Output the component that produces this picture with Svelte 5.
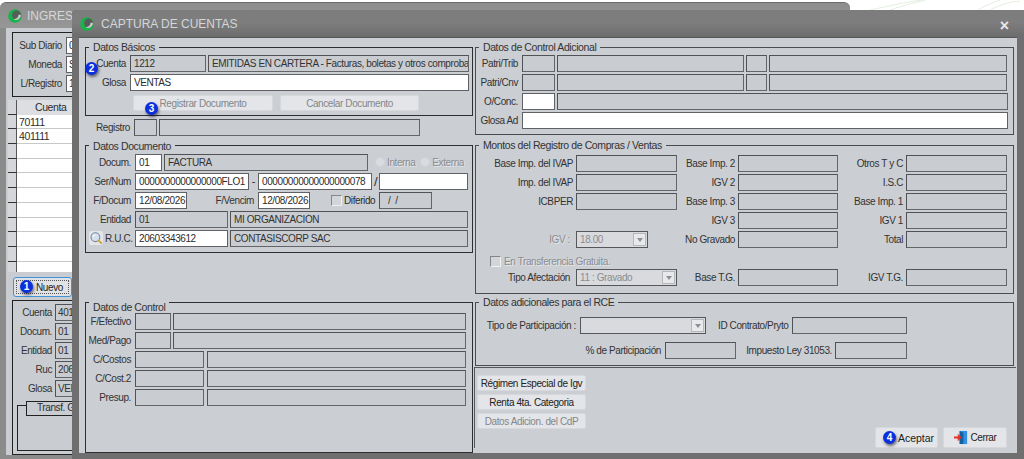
<script>
  // fixed sample data for the back window's visible rows
  const cuentas = ['70111', '401111', '', '', '', '', '', '', '', '', ''];
</script>

{#snippet logo()}
  <svg class="logo" viewBox="0 0 16 16" aria-hidden="true">
    <circle cx="8" cy="8" r="7.8" fill="#16b54a" />
    <circle cx="9.8" cy="7" r="5.2" fill="#585d5a" />
    <path d="M14.8 6.5A5.4 5.4 0 0 1 6.4 11.6 5 5 0 0 0 12 6.5Z" fill="#c9cdca" />
  </svg>
{/snippet}

<div class="desktop">
  <svg class="leaves" viewBox="0 0 174 10" aria-hidden="true">
    <path d="M20 10C40 6 55 2 72 0M40 10C52 6 62 3 76 0M128 10C134 6 142 3 150 0M140 10C146 7 156 2 170 1" />
  </svg>

  <!-- window behind the modal -->
  <section class="win back">
    <header class="title">
      {@render logo()}
      <span class="clip">INGRESO DE COMPROBANTES</span>
    </header>
    <div class="back-body">
      <div class="back-box top">
        <div class="row"><label>Sub Diario</label><input value="05" readonly /></div>
        <div class="row"><label>Moneda</label><input value="S/" readonly /></div>
        <div class="row"><label>L/Registro</label><input value="14" readonly /></div>
      </div>
      <div class="table">
        <div class="corner"></div><div class="th">Cuenta</div>
        {#each cuentas as c}
          <div class="rh"></div><div class="td">{c}</div>
        {/each}
      </div>
      <div class="nuevo-wrap">
        <button class="nuevo"><span class="inner">Nuevo</span></button>
        <b class="badge b1">1</b>
      </div>
      <div class="back-box low">
        <div class="row"><label>Cuenta</label><input disabled value="401111" /></div>
        <div class="row"><label>Docum.</label><input disabled value="01" /></div>
        <div class="row"><label>Entidad</label><input disabled value="01" /></div>
        <div class="row"><label>Ruc</label><input disabled value="20603343612" /></div>
        <div class="row"><label>Glosa</label><input disabled value="VENTAS" /></div>
        <div class="transf"><span>Transf. Gratuita</span></div>
      </div>
    </div>
  </section>

  <!-- modal window -->
  <section class="win front">
    <header class="title">
      {@render logo()}
      <span>CAPTURA DE CUENTAS</span>
      <span class="close">×</span>
    </header>

    <div class="panel">
      <div class="col left">
        <fieldset class="basicos">
          <legend>Datos Básicos</legend>
          <div class="row">
            <label>Cuenta</label>
            <input class="w76" disabled value="1212" />
            <input class="w261" disabled value="EMITIDAS EN CARTERA - Facturas, boletas y otros comprobantes" />
          </div>
          <div class="row">
            <label>Glosa</label>
            <input class="w339" readonly value="VENTAS" />
          </div>
          <div class="actions">
            <button class="btn w140" disabled>Registrar Documento</button>
            <button class="btn w139" disabled>Cancelar Documento</button>
          </div>
          <b class="badge b2">2</b>
          <b class="badge b3">3</b>
        </fieldset>

        <div class="row registro">
          <label>Registro</label>
          <input class="w23" disabled />
          <input class="w261" disabled />
        </div>

        <fieldset class="documento">
          <legend>Datos Documento</legend>
          <div class="row">
            <label>Docum.</label>
            <input class="w27" readonly value="01" />
            <input class="w204" disabled value="FACTURA" />
            <span class="radio first"></span><span class="off">Interna</span>
            <span class="radio second"></span><span class="off">Externa</span>
          </div>
          <div class="row">
            <label>Ser/Num</label>
            <input class="w114" readonly value="0000000000000000FLO1" />
            <span class="sep dash">-</span>
            <input class="w114" readonly value="00000000000000000078" />
            <span class="sep slash">/</span>
            <input class="w89" readonly />
          </div>
          <div class="row">
            <label>F/Docum</label>
            <input class="w52" readonly value="12/08/2026" />
            <label class="vencim">F/Vencim</label>
            <input class="w52" readonly value="12/08/2026" />
            <span class="check diferido"></span><span class="dif-label">Diferido</span>
            <input class="w53 fecha" disabled value="/  /" />
          </div>
          <div class="row">
            <label>Entidad</label>
            <input class="w93" disabled value="01" />
            <input class="w238" disabled value="MI ORGANIZACIÓN" />
          </div>
          <div class="row">
            <svg class="lupa" viewBox="0 0 14 14" aria-hidden="true">
              <rect width="14" height="14" rx="2" fill="#e4e6ea" />
              <circle cx="6.4" cy="6.2" r="4.4" fill="#d3e0f0" stroke="#7d8a9c" stroke-width="1.1" />
              <path d="M4 6.2a2.4 2.4 0 0 1 2.4-2.4" fill="none" stroke="#fff" />
              <path d="M9.8 9.6l2.4 2.4" stroke="#cda93a" stroke-width="2" stroke-linecap="round" />
            </svg>
            <label class="ruc">R.U.C.</label>
            <input class="w93" readonly value="20603343612" />
            <input class="w238" disabled value="CONTASISCORP SAC" />
          </div>
        </fieldset>

        <fieldset class="control">
          <legend>Datos de Control</legend>
          <div class="row"><label>F/Efectivo</label><input class="w36" disabled /><input class="w293" disabled /></div>
          <div class="row"><label>Med/Pago</label><input class="w36" disabled /><input class="w293" disabled /></div>
          <div class="row"><label>C/Costos</label><input class="w69" disabled /><input class="w259 gap1" disabled /></div>
          <div class="row"><label>C/Cost.2</label><input class="w69" disabled /><input class="w259 gap1" disabled /></div>
          <div class="row"><label>Presup.</label><input class="w69" disabled /><input class="w259 gap1" disabled /></div>
        </fieldset>
      </div>

      <div class="col right">
        <fieldset class="adicional">
          <legend>Datos de Control Adicional</legend>
          <div class="row"><label>Patri/Trib</label><input class="w33" disabled /><input class="w187" disabled /><input class="w21" disabled /><input class="w238" disabled /></div>
          <div class="row"><label>Patri/Cnv</label><input class="w33" disabled /><input class="w187" disabled /><input class="w21" disabled /><input class="w238" disabled /></div>
          <div class="row"><label>O/Conc.</label><input class="w33" readonly /><input class="w451" disabled /></div>
          <div class="row"><label>Glosa Ad</label><input class="w486" readonly /></div>
        </fieldset>

        <fieldset class="montos">
          <legend>Montos del Registro de Compras / Ventas</legend>
          <div class="grid">
            <label>Base Imp. del IVAP</label><input disabled /><label>Base Imp. 2</label><input disabled /><label>Otros T y C</label><input disabled />
            <label>Imp. del IVAP</label><input disabled /><label>IGV 2</label><input disabled /><label>I.S.C</label><input disabled />
            <label>ICBPER</label><input disabled /><label>Base Imp. 3</label><input disabled /><label>Base Imp. 1</label><input disabled />
            <span></span><span></span><label>IGV 3</label><input disabled /><label>IGV 1</label><input disabled />
            <label class="off inset">IGV :</label><div class="combo w72"><span>18.00</span><i></i></div><label>No Gravado</label><input disabled /><label>Total</label><input disabled />
            <div class="gratuita"><span class="check"></span><span class="off">En Transferencia Gratuita.</span></div>
            <label class="inset">Tipo Afectación</label><div class="combo"><span>11 : Gravado</span><i></i></div><label>Base T.G.</label><input disabled /><label>IGV T.G.</label><input disabled />
          </div>
        </fieldset>

        <fieldset class="rce">
          <legend>Datos adicionales para el RCE</legend>
          <div class="row">
            <label class="tipo">Tipo de Participación :</label>
            <div class="combo w126"><span></span><i></i></div>
            <label class="contrato">ID Contrato/Pryto</label>
            <input class="w115" disabled />
          </div>
          <div class="row">
            <label class="pct">% de Participación</label>
            <input class="w71" disabled />
            <label class="ley">Impuesto Ley 31053.</label>
            <input class="w72" disabled />
          </div>
        </fieldset>

        <div class="bottom">
          <div class="extras">
            <button class="btn">Régimen Especial de Igv</button>
            <button class="btn">Renta 4ta. Categoria</button>
            <button class="btn" disabled>Datos Adicion. del CdP</button>
          </div>
          <div class="footer">
            <div class="aceptar-wrap">
              <button class="btn big aceptar">Aceptar</button>
              <b class="badge b4">4</b>
            </div>
            <button class="btn big w64">
              <svg class="salir" viewBox="0 0 16 16" aria-hidden="true">
                <path d="M6 1h8v14H6z" fill="#2f8fe0" />
                <path d="M6 1l4 2v12H6z" fill="#17609f" />
                <path d="M0 7h4V4l4 4-4 4V9H0z" fill="#e2332b" />
              </svg>
              Cerrar
            </button>
          </div>
        </div>
      </div>
    </div>
  </section>
</div>

<style>
  :global(body) {
    margin: 0;
    background: #fff;
  }

  .desktop {
    position: relative;
    width: 1024px;
    height: 459px;
    overflow: hidden;
    font-family: "Liberation Sans", Arial, sans-serif;
    font-size: 10px;
    letter-spacing: -0.4px;
    color: #2c2c2c;
  }

  .leaves {
    position: absolute;
    left: 850px;
    top: 0;
    width: 174px;
    height: 10px;
    fill: none;
    stroke: #e3efe0;
  }

  /* windows */
  .win {
    position: absolute;
    display: flex;
    flex-direction: column;
    box-sizing: border-box;
    border-radius: 6px 6px 0 0;
  }
  .back {
    left: 0;
    top: 2px;
    width: 850px;
    height: 457px;
    background: #8b8b8b;
    border-top: 1px solid #6c6c6c;
  }
  .front {
    left: 72px;
    top: 10px;
    width: 952px;
    height: 449px;
    background: #6f6f6f;
    border-radius: 4px 0 0 0;
  }

  .title {
    display: flex;
    align-items: center;
    flex: none;
    gap: 7px;
    height: 25px;
    padding-left: 8px;
    font-size: 12px;
    letter-spacing: 0;
    color: #d4d6d8;
  }
  .back .title {
    background: linear-gradient(#8d8d8d, #979797);
    border-radius: 6px 6px 0 0;
    gap: 5px;
  }
  .front .title {
    height: 27px;
    background: linear-gradient(#7c7c7c, #7e7e7e 45%, #6c6c6c);
    border-radius: 4px 0 0 0;
  }
  .clip {
    width: 46px;
    overflow: hidden;
    white-space: nowrap;
  }
  .logo {
    flex: none;
    width: 14px;
    height: 14px;
  }
  .close {
    margin: 5px 15px 0 auto;
    font-size: 16px;
    line-height: 16px;
    font-weight: bold;
    color: #e8e8e8;
  }

  /* shared field styles */
  input {
    box-sizing: border-box;
    min-width: 0;
    height: 17px;
    margin: 0;
    padding: 0 0 0 3px;
    border: 1px solid #5f6164;
    background: #fff;
    font: inherit;
    letter-spacing: inherit;
    color: #2c2c2c;
    outline: none;
  }
  input:disabled {
    background: #c9ccd1;
    border-color: #636569;
    border-top-color: #505256;
    border-left-color: #505256;
    -webkit-text-fill-color: #333;
    opacity: 1;
  }
  label {
    text-align: right;
    white-space: nowrap;
    color: #333;
  }

  .row {
    display: flex;
    align-items: center;
    gap: 2px;
    height: 17px;
    margin-bottom: 2px;
  }
  .row label {
    flex: none;
    width: 45px;
    margin-right: 2px;
  }

  fieldset {
    position: relative;
    box-sizing: border-box;
    min-width: 0;
    margin: 0;
    padding: 2px 0 0;
    border: 1px solid #2e2f31;
    border-radius: 0;
  }
  legend {
    height: 12px;
    margin-left: 3px;
    padding: 0 4px;
    font-size: 10.5px;
    line-height: 12px;
    color: #333;
  }

  .off {
    color: #8b8d90;
    text-shadow: 1px 1px 0 #e4e6e9;
  }
  .inset {
    padding-right: 3px;
  }

  .btn {
    box-sizing: border-box;
    height: 16px;
    padding: 0;
    border: 1px solid #d6d8dc;
    border-radius: 2px;
    background: #e3e5e8;
    font: inherit;
    letter-spacing: inherit;
    white-space: nowrap;
    color: #222;
  }
  .btn:disabled {
    color: #84868a;
  }

  .radio {
    flex: none;
    width: 10px;
    height: 10px;
    border-radius: 50%;
    background: #d9dbde;
    border: 1px solid #d0d2d5;
    box-sizing: border-box;
  }
  .check {
    flex: none;
    box-sizing: border-box;
    display: inline-block;
    width: 11px;
    height: 11px;
    border: 1px solid #85878a;
    border-right-color: #eef0f2;
    border-bottom-color: #eef0f2;
    background: #d3d5d9;
  }

  .combo {
    box-sizing: border-box;
    display: flex;
    align-items: center;
    justify-content: space-between;
    height: 17px;
    padding: 0 1px 0 3px;
    border: 1px solid #55575a;
    background: #d8dade;
    color: #8b8d90;
  }
  .combo i {
    position: relative;
    width: 13px;
    height: 13px;
    background: #e8e9eb;
    border: 1px solid #b5b7ba;
    box-sizing: border-box;
  }
  .combo i::after {
    content: "";
    position: absolute;
    left: 3px;
    top: 4px;
    border: 3px solid transparent;
    border-top: 4px solid #8d8f92;
    border-bottom: 0;
  }

  /* badges sit over the form */
  .badge {
    position: absolute;
    z-index: 3;
    width: 13px;
    height: 13px;
    border-radius: 50%;
    background: #0b2fdc;
    color: #fff;
    font-size: 10px;
    letter-spacing: 0;
    line-height: 13px;
    text-align: center;
    box-shadow: 1px 2px 3px rgba(20, 20, 40, 0.6);
  }
  .b1 { left: 7px; top: 3px; }
  .b2 { left: -1px; top: 9px; }
  .b3 { left: 59px; top: 49px; }
  .b4 { left: 8px; top: 4px; }

  /* back window */
  .back-body {
    flex: 1;
    display: flex;
    flex-direction: column;
    margin: 0 0 4px 6px;
    padding: 4px 0 0 6px;
    background: #c9ccd1;
  }
  .back-box {
    position: relative;
    box-sizing: border-box;
    border: 1px solid #222;
    padding: 4px 0 0 4px;
  }
  .back-box input {
    width: 300px;
    padding-left: 2px;
  }
  .back-box.top {
    height: 65px;
  }
  .table {
    display: grid;
    grid-template-columns: 9px 1fr;
    grid-auto-rows: 14.7px;
    margin: 3px 0 0 -4px;
    height: 172px;
    overflow: hidden;
    background: #fff;
    font-size: 10.5px;
  }
  .corner,
  .rh {
    background: #d4d6d9;
    border-bottom: 1px solid #333;
    border-right: 1px solid #555;
  }
  .th {
    padding-left: 18px;
    background: #dcdee1;
    line-height: 15px;
  }
  .td {
    padding-left: 2px;
    line-height: 14px;
    border-bottom: 1px solid #c8c8c8;
  }
  .nuevo-wrap {
    position: relative;
    width: 59px;
    margin: 5px 0 3px 1px;
  }
  .nuevo {
    box-sizing: border-box;
    width: 59px;
    height: 20px;
    padding: 2px;
    border: 1px solid #3f93d6;
    border-radius: 3px;
    background: #e0e2e5;
    font: inherit;
    letter-spacing: inherit;
    color: #222;
  }
  .inner {
    display: block;
    height: 100%;
    line-height: 14px;
    padding-left: 19px;
    text-align: left;
    box-sizing: border-box;
    border: 1px dotted #555;
  }
  .back-box.low {
    height: 155px;
    padding-top: 3px;
  }
  .back-box.low label {
    width: 35px;
    margin-right: 1px;
  }
  .transf {
    position: absolute;
    left: 4px;
    top: 104px;
    width: 700px;
    height: 46px;
    border: 1px solid #222;
    box-sizing: border-box;
  }
  .transf span {
    position: absolute;
    left: 8px;
    top: -5px;
    width: 200px;
    height: 13px;
    padding-left: 10px;
    background: #c9ccd1;
    border: 1px solid #222;
    line-height: 12px;
  }

  /* modal layout */
  .panel {
    flex: none;
    display: flex;
    gap: 2px;
    box-sizing: border-box;
    width: 938px;
    height: 416px;
    margin-left: 7px;
    padding: 3px 0 0 6px;
    background: #cbced3;
    border-top: 1px solid #555;
  }
  .col {
    display: flex;
    flex-direction: column;
    flex: none;
  }
  .left { width: 388px; }
  .right { width: 541px; }
  .right fieldset {
    width: 539px;
    border-color: #4a4c50;
  }

  /* Datos Básicos */
  .basicos { height: 75px; }
  .basicos label { width: 40px; }
  .actions {
    display: flex;
    gap: 7px;
    margin: 4px 0 0 47px;
  }
  .registro { margin: 3px 0 4px; }

  /* Datos Documento */
  .documento { height: 114px; }
  .documento .vencim {
    width: 65px;
  }
  .documento .ruc {
    width: 26px;
  }
  .lupa {
    flex: none;
    width: 14px;
    height: 14px;
    margin-left: 3px;
  }
  .radio.first { margin-left: 5px; }
  .radio.second { margin-left: 3px; }
  .sep { text-align: center; }
  .dash { width: 5px; font-size: 11px; }
  .slash { width: 3px; font-size: 13px; }
  .diferido { margin-left: 19px; }
  .dif-label { width: 33px; }
  .fecha { padding-left: 8px; }

  /* Datos de Control */
  .control {
    height: 157px;
    margin-top: 43px;
    padding-top: 5px;
  }
  /* this legend hangs below the top border */
  .control legend {
    position: relative;
    top: 5px;
  }
  .gap1 { margin-left: 1px; }

  /* Datos de Control Adicional */
  .adicional { height: 94px; }
  .adicional .row label { width: 42px; }

  /* Montos */
  .montos {
    height: 155px;
    margin-top: 4px;
    padding-top: 4px;
  }
  .grid {
    display: grid;
    grid-template-columns: 97px 101px 55px 100px 62px 101px;
    grid-auto-rows: 17px;
    column-gap: 3px;
    row-gap: 2px;
    width: 533px;
    align-items: center;
  }
  .grid input { width: 100%; }
  .gratuita {
    grid-column: 1 / -1;
    display: flex;
    align-items: flex-end;
    align-self: end;
    gap: 3px;
    padding-left: 14px;
  }

  /* RCE */
  .rce {
    height: 70px;
    margin-top: 2px;
    padding-top: 9px;
  }
  .rce .row { margin-bottom: 8px; }
  .rce .tipo { width: 100px; }
  .rce .contrato { width: 70px; margin-left: 10px; }
  .rce .pct { width: 185px; }
  .rce .ley { width: 86px; margin: 0 1px 0 8px; }

  /* bottom block */
  .bottom {
    display: flex;
    justify-content: space-between;
    flex: 1;
    box-sizing: border-box;
    margin: 1px 0 5px -1px;
    padding: 7px 9px 0 2px;
    border-top: 1px solid #55575a;
    border-left: 1px solid #55575a;
  }
  .extras {
    display: flex;
    flex-direction: column;
    gap: 3px;
    width: 109px;
  }
  .footer {
    display: flex;
    align-items: flex-end;
    gap: 5px;
  }
  .aceptar-wrap { position: relative; }
  .big {
    display: flex;
    align-items: center;
    justify-content: center;
    gap: 2px;
    height: 21px;
  }
  .aceptar {
    width: 63px;
    padding-left: 19px;
    font-size: 10.5px;
    letter-spacing: 0;
  }
  .salir { width: 15px; height: 15px; }

  /* widths */
  .w21 { width: 21px; } .w23 { width: 23px; } .w27 { width: 27px; }
  .w33 { width: 33px; } .w36 { width: 36px; } .w52 { width: 52px; }
  .w53 { width: 53px; } .w69 { width: 69px; } .w71 { width: 71px; }
  .w72 { width: 72px; } .w76 { width: 76px; }
  .w89 { width: 89px; } .w93 { width: 93px; } .w114 { width: 114px; }
  .w115 { width: 115px; } .w126 { width: 126px; } .w140 { width: 140px; }
  .w139 { width: 139px; } .w187 { width: 187px; } .w204 { width: 204px; }
  .w238 { width: 238px; } .w259 { width: 259px; } .w261 { width: 261px; }
  .w293 { width: 293px; } .w339 { width: 339px; } .w451 { width: 451px; }
  .w486 { width: 486px; } .w64 { width: 64px; }
</style>
